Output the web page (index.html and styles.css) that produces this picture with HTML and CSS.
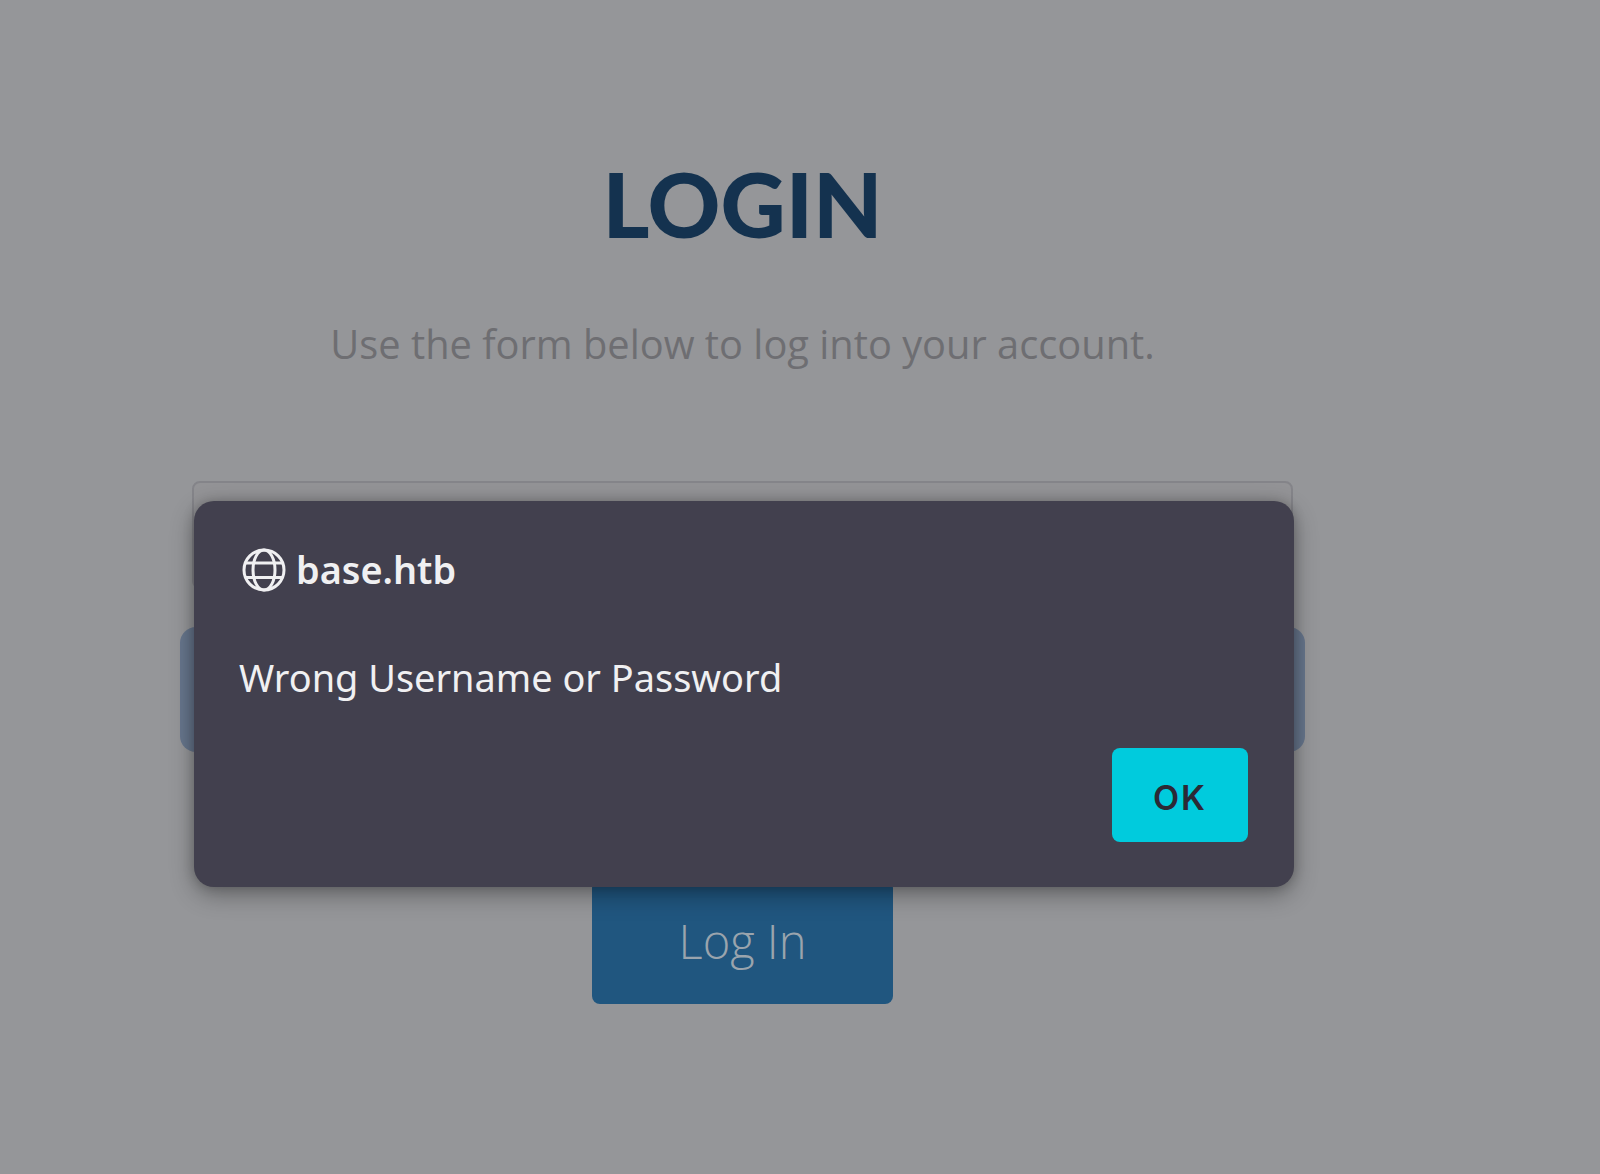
FILE: index.html
```html
<!DOCTYPE html>
<html lang="en">
<head>
<meta charset="utf-8">
<title>Login</title>
<link rel="stylesheet" href="styles.css">
</head>
<body>
<main class="page">
  <h1 class="title">LOGIN</h1>
  <p class="lead">Use the form below to log into your account.</p>
  <form class="form">
    <div class="field"></div>
    <div class="field field-focus"></div>
    <button class="submit" type="button">Log In</button>
  </form>
</main>
<div class="dialog" role="alertdialog">
  <div class="origin">
    <svg class="globe" viewBox="0 0 44 44" fill="none" stroke="currentColor" stroke-width="3">
      <circle cx="22" cy="22" r="20"/>
      <ellipse cx="22" cy="22" rx="11" ry="20"/>
      <path d="M3.5 15h37M3.5 29.500h37"/>
    </svg>
    <span>base.htb</span>
  </div>
  <p class="message">Wrong Username or Password</p>
  <div class="actions"><button class="ok" type="button">OK</button></div>
</div>
</body>
</html>
```
FILE: styles.css
```css
* { box-sizing: border-box; }
html, body { margin: 0; height: 1174px; overflow: hidden; }
body { background: #959699; position: relative; font-family: "Open Sans", sans-serif; }
.page { width: 1101px; margin-left: 192px; padding-top: 154px; display: flex; flex-direction: column; align-items: center; }
.title { margin: 0; font: 900 90px/98px Lato, sans-serif; letter-spacing: 0; color: #14324f; }
.lead { margin: 66px 0 0; font-size: 39.8px; line-height: 52px; font-weight: 400; color: #6e6e72; white-space: nowrap; }
.form { width: 100%; display: flex; flex-direction: column; align-items: center; margin-top: 111px; }
.field { width: 100%; height: 108px; border: 2px solid #848489; border-radius: 8px; background: #939396; }
.field-focus { margin-top: 38px; width: 1125px; height: 125px; border: 0; border-radius: 16px; background: #66758c; }
.submit { margin-top: 128px; width: 301px; height: 124px; padding-bottom: 3px; border: 0; border-radius: 8px; background: #20567f; color: #9aa4ad; font: 300 47px "Open Sans", sans-serif; }
.dialog { position: absolute; left: 194px; top: 501px; width: 1100px; height: 386px; padding: 47px 46px 45px 45px; background: #42404e; border-radius: 20px; box-shadow: 0 8px 24px rgba(0,0,0,.32), 0 0 12px rgba(0,0,0,.2); color: #f0f0f2; display: flex; flex-direction: column; }
.origin { display: flex; align-items: center; gap: 10px; font: 600 37.800px/44px "Noto Sans", sans-serif; padding-left: 3px; }
.globe { width: 44px; height: 44px; flex: none; }
.message { margin: 62px 0 0; font: 400 37.900px/46px "Noto Sans", sans-serif; }
.actions { margin-top: auto; display: flex; justify-content: flex-end; }
.ok { width: 136px; height: 94px; padding-top: 5px; border: 0; border-radius: 8px; background: #00cbdd; color: #2b2935; font: 600 34px Inter, sans-serif; letter-spacing: 2px; }
```
